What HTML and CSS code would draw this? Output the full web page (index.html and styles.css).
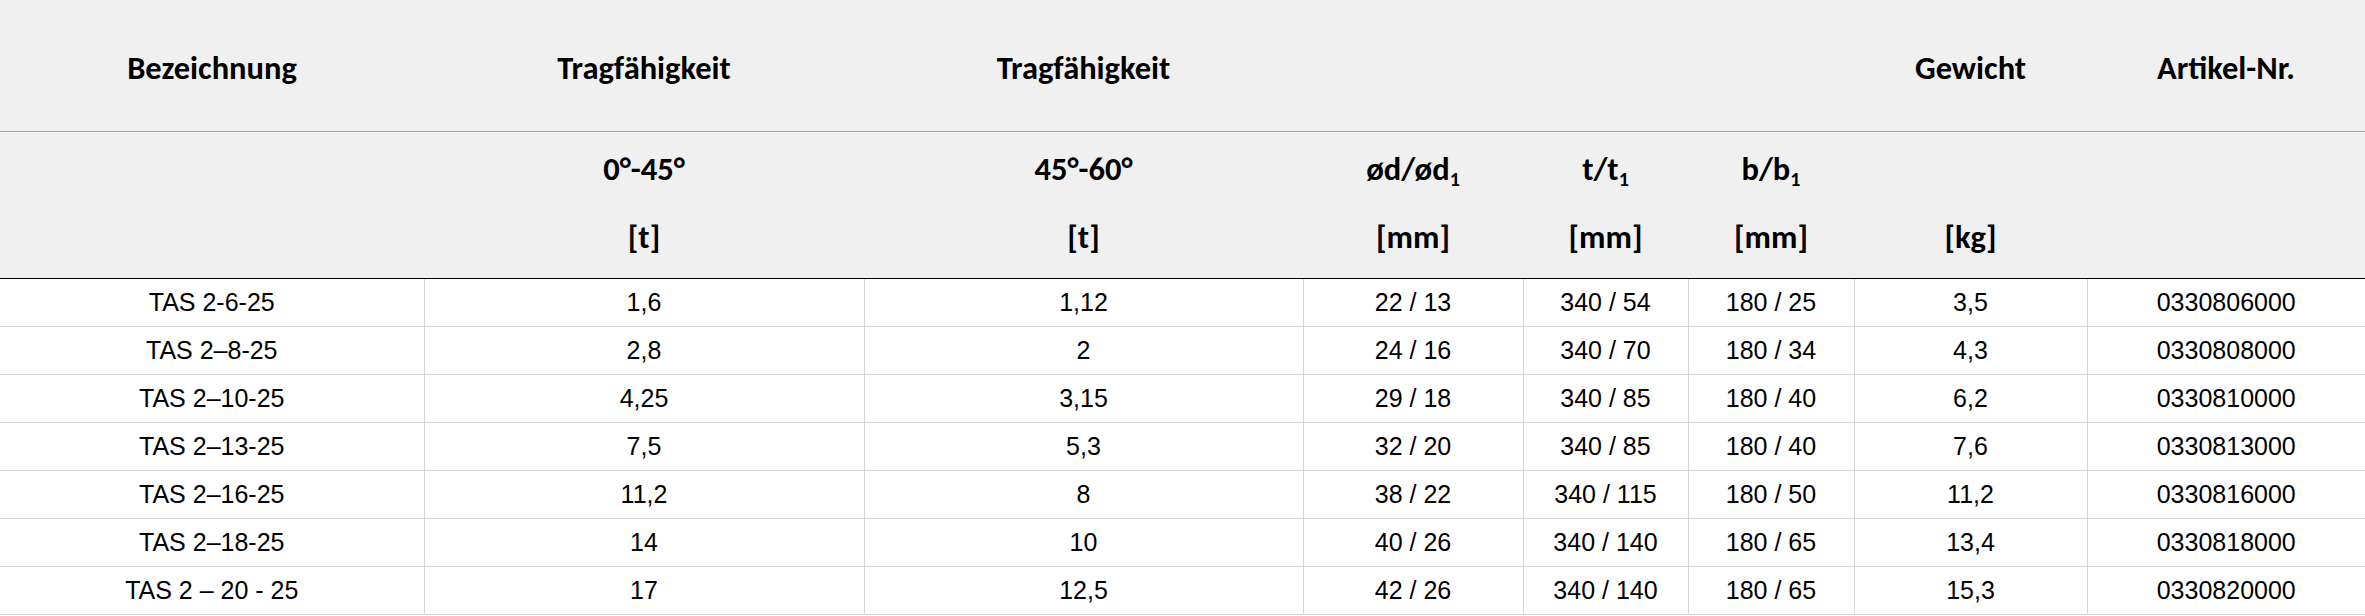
FILE: index.html
```html
<!DOCTYPE html>
<html lang="de">
<head>
<meta charset="utf-8">
<title>TAS 2</title>
<link rel="stylesheet" href="styles.css">
</head>
<body>
<table class="spec">
  <colgroup>
    <col class="c1"><col class="c2"><col class="c3"><col class="c4"><col class="c5"><col class="c6"><col class="c7"><col class="c8">
  </colgroup>
  <thead>
    <tr class="h1">
      <th>Bezeichnung</th>
      <th>Tragfähigkeit</th>
      <th>Tragfähigkeit</th>
      <th></th>
      <th></th>
      <th></th>
      <th>Gewicht</th>
      <th>Artikel-Nr.</th>
    </tr>
    <tr class="h2">
      <th></th>
      <th><div class="l">0°-45°</div><div class="l">[t]</div></th>
      <th><div class="l">45°-60°</div><div class="l">[t]</div></th>
      <th><div class="l">ød/ød<sub>1</sub></div><div class="l">[mm]</div></th>
      <th><div class="l">t/t<sub>1</sub></div><div class="l">[mm]</div></th>
      <th><div class="l">b/b<sub>1</sub></div><div class="l">[mm]</div></th>
      <th><div class="l"></div><div class="l">[kg]</div></th>
      <th></th>
    </tr>
  </thead>
  <tbody>
    <tr><td>TAS 2-6-25</td><td>1,6</td><td>1,12</td><td>22 / 13</td><td>340 / 54</td><td>180 / 25</td><td>3,5</td><td>0330806000</td></tr>
    <tr><td>TAS 2–8-25</td><td>2,8</td><td>2</td><td>24 / 16</td><td>340 / 70</td><td>180 / 34</td><td>4,3</td><td>0330808000</td></tr>
    <tr><td>TAS 2–10-25</td><td>4,25</td><td>3,15</td><td>29 / 18</td><td>340 / 85</td><td>180 / 40</td><td>6,2</td><td>0330810000</td></tr>
    <tr><td>TAS 2–13-25</td><td>7,5</td><td>5,3</td><td>32 / 20</td><td>340 / 85</td><td>180 / 40</td><td>7,6</td><td>0330813000</td></tr>
    <tr><td>TAS 2–16-25</td><td>11,2</td><td>8</td><td>38 / 22</td><td>340 / 115</td><td>180 / 50</td><td>11,2</td><td>0330816000</td></tr>
    <tr><td>TAS 2–18-25</td><td>14</td><td>10</td><td>40 / 26</td><td>340 / 140</td><td>180 / 65</td><td>13,4</td><td>0330818000</td></tr>
    <tr><td>TAS 2 – 20 - 25</td><td>17</td><td>12,5</td><td>42 / 26</td><td>340 / 140</td><td>180 / 65</td><td>15,3</td><td>0330820000</td></tr>
  </tbody>
</table>
</body>
</html>
```
FILE: styles.css
```css
html, body {
  margin: 0;
  padding: 0;
  background: #ffffff;
}

.spec {
  width: 2365px;
  border-collapse: collapse;
  table-layout: fixed;
  color: #000000;
}

.c1 { width: 424px; }
.c2 { width: 440px; }
.c3 { width: 439px; }
.c4 { width: 220px; }
.c5 { width: 165px; }
.c6 { width: 166px; }
.c7 { width: 233px; }
.c8 { width: 278px; }

.spec th {
  background: #f0f0f0;
  font-family: Carlito, Calibri, "Open Sans", sans-serif;
  font-weight: 700;
  font-size: 32.5px;
  line-height: 40px;
  text-align: center;
  padding: 0;
}

.h1 th {
  height: 131px;
  box-sizing: border-box;
  padding: 48px 0 43px;
  vertical-align: top;
  border-bottom: 1px solid #a6a6a6;
}

.h2 th {
  box-sizing: border-box;
  height: 147px;
  padding: 17px 0 21px;
  vertical-align: top;
  border-bottom: 1px solid #000000;
}

.h2 .l {
  height: 40px;
}

.h2 .l + .l {
  margin-top: 28px;
}

.spec sub {
  font-size: 62%;
  line-height: 0;
  vertical-align: -0.28em;
}

.spec td {
  font-family: "Liberation Sans", Arial, sans-serif;
  font-size: 25px;
  height: 47px;
  padding: 0;
  text-align: center;
  vertical-align: middle;
  border-bottom: 1px solid #d6d6d6;
  border-left: 1px solid #d6d6d6;
}

.spec td:first-child {
  border-left: none;
}
```
